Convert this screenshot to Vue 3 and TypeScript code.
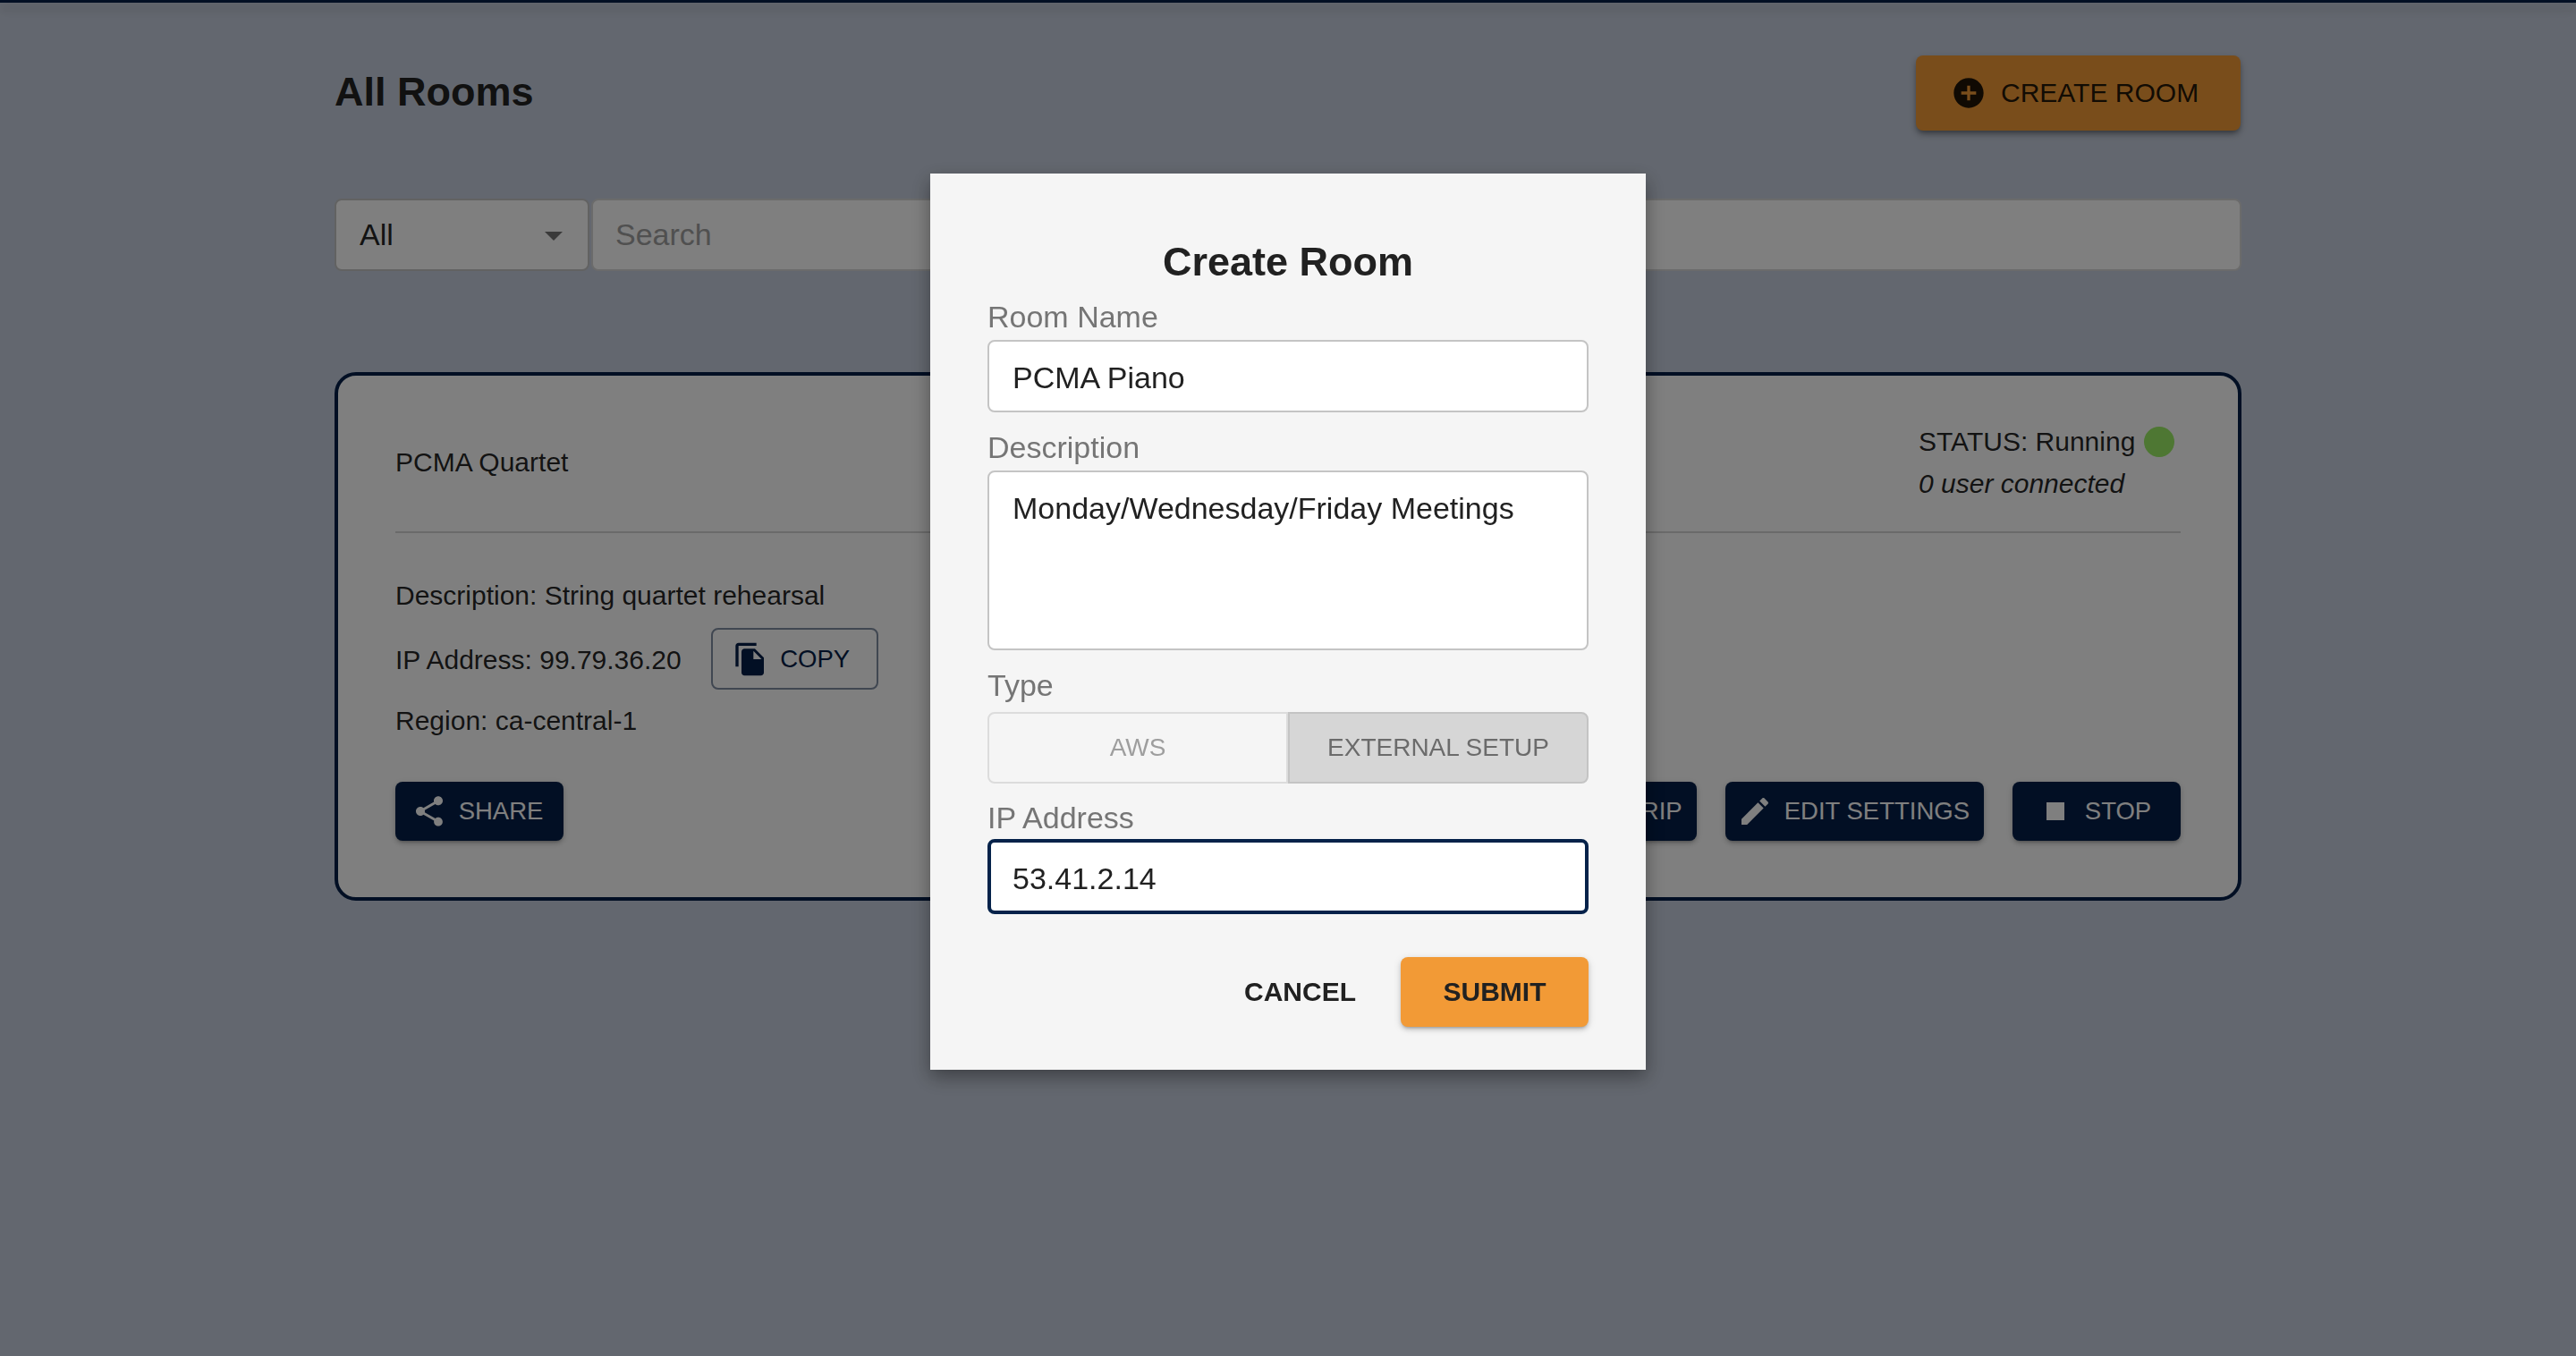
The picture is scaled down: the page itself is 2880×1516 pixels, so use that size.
<template>
  <div class="page">
    <div class="top-bar"></div>

    <main class="content">
      <header class="header">
        <h1 class="page-title">All Rooms</h1>
        <button class="create-btn">
          <svg class="icon" viewBox="0 0 24 24"><path d="M12 2C6.48 2 2 6.48 2 12s4.48 10 10 10 10-4.48 10-10S17.52 2 12 2zm5 11h-4v4h-2v-4H7v-2h4V7h2v4h4v2z" /></svg>
          CREATE ROOM
        </button>
      </header>

      <div class="filters">
        <div class="select">
          <span>All</span>
          <svg class="select-arrow" viewBox="0 0 24 24"><path d="M7 10l5 5 5-5z" /></svg>
        </div>
        <input class="search" placeholder="Search" />
      </div>

      <section class="room-card">
        <div class="card-top">
          <span class="room-name">PCMA Quartet</span>
          <div class="status">
            <div class="status-line">STATUS: Running <span class="status-dot"></span></div>
            <div class="users">0 user connected</div>
          </div>
        </div>

        <div class="details">
          <div class="detail-desc">Description: String quartet rehearsal</div>
          <div class="detail-ip">
            <span class="ip-text">IP Address: 99.79.36.20</span>
            <button class="btn btn-outline">
              <svg class="icon" viewBox="0 0 24 24"><path d="M16 1H4c-1.1 0-2 .9-2 2v14h2V3h12V1zm-1 4l6 6v10c0 1.1-.9 2-2 2H7.99C6.89 23 6 22.1 6 21l.01-14c0-1.1.89-2 1.99-2h7zm-1 7h5.5L14 6.5V12z" /></svg>
              COPY
            </button>
          </div>
          <div class="detail-region">Region: ca-central-1</div>
        </div>

        <div class="actions">
          <button class="btn btn-solid">
            <svg class="icon" viewBox="0 0 24 24"><path d="M18 16.08c-.76 0-1.44.3-1.96.77L8.91 12.7c.05-.23.09-.46.09-.7s-.04-.47-.09-.7l7.05-4.11c.54.5 1.25.81 2.04.81 1.66 0 3-1.34 3-3s-1.34-3-3-3-3 1.34-3 3c0 .24.04.47.09.7L8.04 9.81C7.5 9.31 6.79 9 6 9c-1.66 0-3 1.34-3 3s1.34 3 3 3c.79 0 1.5-.31 2.04-.81l7.12 4.16c-.05.21-.08.43-.08.65 0 1.61 1.31 2.92 2.92 2.92 1.61 0 2.92-1.31 2.92-2.92s-1.31-2.92-2.92-2.92z" /></svg>
            SHARE
          </button>
          <div class="actions-right">
            <button class="btn btn-solid btn-hidden-part">RIP</button>
            <button class="btn btn-solid btn-edit">
              <svg class="icon" viewBox="0 0 24 24"><path d="M3 17.25V21h3.75L17.81 9.94l-3.75-3.75L3 17.25zM20.71 7.04c.39-.39.39-1.02 0-1.41l-2.34-2.34c-.39-.39-1.02-.39-1.41 0l-1.83 1.83 3.75 3.75 1.83-1.83z" /></svg>
              EDIT SETTINGS
            </button>
            <button class="btn btn-solid">
              <svg class="icon" viewBox="0 0 24 24"><path d="M6 6h12v12H6z" /></svg>
              STOP
            </button>
          </div>
        </div>
      </section>
    </main>

    <!-- Create room dialog -->
    <div class="backdrop">
      <form class="dialog" @submit.prevent>
        <h2 class="dialog-title">Create Room</h2>

        <label class="field-label label-name">Room Name</label>
        <input v-model="roomName" class="field field-name" />

        <label class="field-label label-desc">Description</label>
        <textarea v-model="description" class="field field-desc"></textarea>

        <label class="field-label label-type">Type</label>
        <div class="toggle">
          <button
            v-for="t in types"
            :key="t"
            type="button"
            class="toggle-item"
            :class="{ selected: t === roomType }"
            @click="roomType = t"
          >
            {{ t }}
          </button>
        </div>

        <label class="field-label label-ip">IP Address</label>
        <input v-model="ipAddress" class="field field-ip" />

        <div class="dialog-actions">
          <button type="button" class="cancel-btn">CANCEL</button>
          <button type="submit" class="submit-btn">SUBMIT</button>
        </div>
      </form>
    </div>
  </div>
</template>

<script setup lang="ts">
import { ref } from 'vue'

const types: string[] = ['AWS', 'EXTERNAL SETUP']

const roomName = ref<string>('PCMA Piano')
const description = ref<string>('Monday/Wednesday/Friday Meetings')
const roomType = ref<string>('EXTERNAL SETUP')
const ipAddress = ref<string>('53.41.2.14')
</script>

<style>
html,
body {
  margin: 0;
  background: #c7cfde;
}
</style>

<style scoped>
.page {
  min-height: 1516px;
  background: #c7cfde;
  font-family: "Liberation Sans", Arial, sans-serif;
  color: rgba(0, 0, 0, 0.87);
}

.top-bar {
  height: 3px;
  background: #041e48;
  box-shadow: 0 4px 8px -2px rgba(0, 0, 0, 0.2), 0 8px 10px rgba(0, 0, 0, 0.14), 0 2px 20px rgba(0, 0, 0, 0.12);
}

.content {
  width: 2132px;
  margin: 0 auto;
  padding-top: 59px;
}

.header {
  display: flex;
  align-items: center;
  justify-content: space-between;
}

.page-title {
  margin: 0 0 2px;
  font-size: 45px;
  font-weight: 700;
  color: #222;
}

.icon {
  width: 40px;
  height: 40px;
  flex: none;
  fill: currentColor;
}

.create-btn {
  display: flex;
  align-items: center;
  gap: 16px;
  width: 363px;
  height: 84px;
  margin-right: 1px;
  padding: 0 0 0 39px;
  border: none;
  border-radius: 8px;
  background: #f29a36;
  color: rgba(0, 0, 0, 0.87);
  font: 400 30px "Liberation Sans", Arial, sans-serif;
  box-shadow: 0 4px 6px -2px rgba(0, 0, 0, 0.4), 0 4px 10px rgba(0, 0, 0, 0.2);
}

.filters {
  display: flex;
  gap: 2px;
  margin-top: 76px;
}

.select {
  display: flex;
  align-items: center;
  justify-content: space-between;
  box-sizing: border-box;
  width: 285px;
  height: 81px;
  padding: 0 14px 0 26px;
  border: 2px solid #c4c4c4;
  border-radius: 8px;
  background: #fff;
  font-size: 34px;
}

.select-arrow {
  width: 48px;
  height: 48px;
  fill: rgba(0, 0, 0, 0.54);
}

.search {
  flex: 1;
  min-width: 0;
  box-sizing: border-box;
  height: 81px;
  padding: 0 25px;
  border: 2px solid #d6d6d6;
  border-radius: 8px;
  background: #fff;
  font: 400 34px "Liberation Sans", Arial, sans-serif;
  outline: none;
}

.search::placeholder {
  color: #a0a0a0;
  opacity: 1;
}

.room-card {
  box-sizing: border-box;
  height: 591px;
  margin-top: 113px;
  padding: 50px 64px 0;
  border: 4px solid #041e48;
  border-radius: 24px;
  background: #fff;
  font-size: 30px;
}

.card-top {
  display: flex;
  align-items: center;
  justify-content: space-between;
  padding-bottom: 30px;
  border-bottom: 2px solid #d4d4d4;
}

.status {
  width: 293px;
}

.status-line,
.users {
  display: flex;
  align-items: center;
  height: 47px;
}

.users {
  font-style: italic;
}

.status-dot {
  width: 34px;
  height: 34px;
  margin-left: 10px;
  border-radius: 50%;
  background: #9cee66;
}

.details {
  padding-top: 50px;
  line-height: 40px;
}

.detail-ip {
  display: flex;
  align-items: center;
  gap: 33px;
  margin-top: 16px;
}

.ip-text {
  padding-top: 2px;
}

.detail-region {
  margin-top: 15px;
}

.btn {
  display: flex;
  align-items: center;
  justify-content: center;
  gap: 13px;
  box-sizing: border-box;
  min-width: 188px;
  height: 66px;
  padding: 0 16px 0 11px;
  border-radius: 8px;
  font: 400 27.5px "Liberation Sans", Arial, sans-serif;
}

.btn-solid {
  border: none;
  background: #041e48;
  color: #fff;
  box-shadow: 0 3px 3px -2px rgba(0, 0, 0, 0.2), 0 3px 5px rgba(0, 0, 0, 0.14), 0 2px 10px rgba(0, 0, 0, 0.12);
}

.btn-outline {
  min-width: 187px;
  height: 69px;
  padding-right: 18px;
  border: 2px solid rgba(4, 30, 72, 0.5);
  background: transparent;
  color: #041e48;
}

.btn-edit {
  gap: 13px;
  padding-left: 13px;
}

.btn-hidden-part {
  justify-content: flex-end;
  width: 260px;
}

.actions {
  display: flex;
  justify-content: space-between;
  margin-top: 48px;
}

.actions-right {
  display: flex;
  gap: 32px;
}

.backdrop {
  position: fixed;
  inset: 0;
  background: rgba(0, 0, 0, 0.5);
}

.dialog {
  position: absolute;
  top: 194px;
  left: 1040px;
  display: flex;
  flex-direction: column;
  box-sizing: border-box;
  width: 800px;
  height: 1002px;
  padding: 74px 64px 48px;
  background: #f5f5f5;
  box-shadow: 0 8px 20px rgba(0, 0, 0, 0.38);
}

.dialog-title {
  margin: 0;
  font-size: 45px;
  line-height: 50px;
  font-weight: 700;
  text-align: center;
  color: #212121;
}

.field-label {
  font-size: 34px;
  line-height: 40px;
  color: #757575;
}

.label-name {
  margin-top: 16px;
}

.label-desc,
.label-type {
  margin-top: 19px;
}

.label-ip {
  margin-top: 18px;
}

.field {
  box-sizing: border-box;
  width: 100%;
  padding: 0 26px;
  border: 2px solid #c4c4c4;
  border-radius: 8px;
  background: #fff;
  color: #212121;
  font: 400 34px "Liberation Sans", Arial, sans-serif;
  outline: none;
}

.field-name {
  height: 81px;
  margin-top: 6px;
  padding-top: 4px;
}

.field-desc {
  height: 201px;
  margin-top: 6px;
  padding-top: 20px;
  line-height: 40px;
  resize: none;
}

.field-ip {
  height: 84px;
  margin-top: 4px;
  padding: 4px 24px 0;
  border: 4px solid #05224a;
}

.toggle {
  display: flex;
  height: 80px;
  margin-top: 10px;
}

.toggle-item {
  flex: 1;
  border: 2px solid #dcdcdc;
  border-radius: 8px 0 0 8px;
  background: transparent;
  color: #9e9e9e;
  font: 400 28px "Liberation Sans", Arial, sans-serif;
}

.toggle-item.selected {
  border-color: #c4c4c4;
  border-radius: 0 8px 8px 0;
  background: #d6d6d6;
  color: #6b6b6b;
}

.dialog-actions {
  display: flex;
  align-items: center;
  justify-content: flex-end;
  gap: 50px;
  margin-top: 48px;
}

.cancel-btn,
.submit-btn {
  border: none;
  font: 700 30px "Liberation Sans", Arial, sans-serif;
  color: #212121;
}

.cancel-btn {
  padding: 0;
  background: transparent;
}

.submit-btn {
  width: 210px;
  height: 78px;
  border-radius: 8px;
  background: #f29a36;
  box-shadow: 0 3px 3px -2px rgba(0, 0, 0, 0.2), 0 3px 5px rgba(0, 0, 0, 0.14), 0 2px 10px rgba(0, 0, 0, 0.12);
}
</style>
